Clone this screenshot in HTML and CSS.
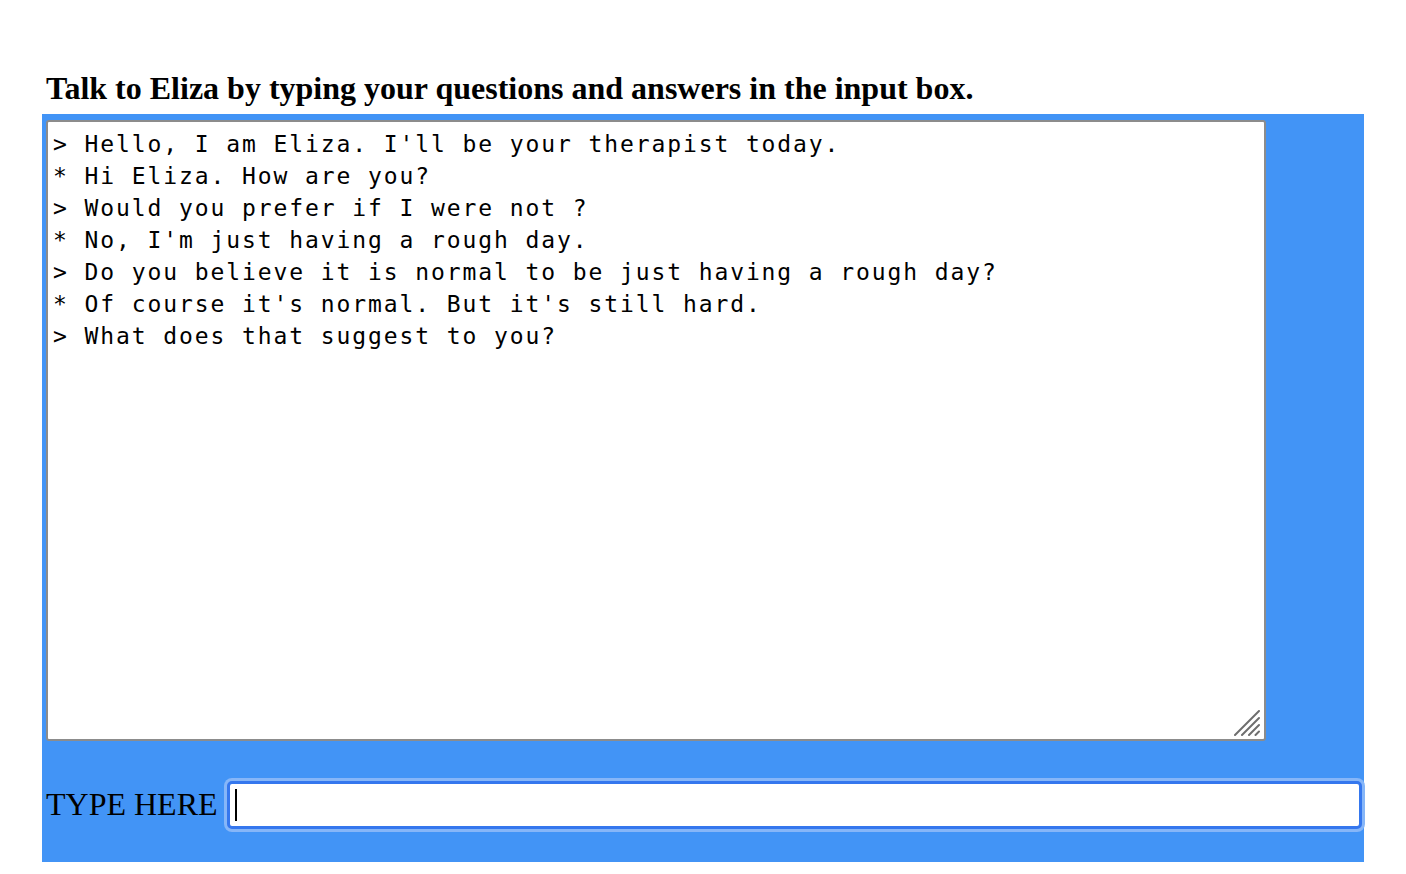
FILE: index.html
```html
<!DOCTYPE html>
<html lang="en">
<head>
<meta charset="utf-8">
<title>Eliza</title>
<link rel="stylesheet" href="styles.css">
</head>
<body>
<div class="page">
  <h1 class="title">Talk to Eliza by typing your questions and answers in the input box.</h1>
  <form class="panel">
    <div class="log-wrap">
      <textarea class="log" rows="19" cols="70">&gt; Hello, I am Eliza. I'll be your therapist today.
* Hi Eliza. How are you?
&gt; Would you prefer if I were not ?
* No, I'm just having a rough day.
&gt; Do you believe it is normal to be just having a rough day?
* Of course it's normal. But it's still hard.
&gt; What does that suggest to you?</textarea>
      <svg class="grip" width="26" height="26" viewBox="0 0 26 26" aria-hidden="true">
        <path d="M1 25 L25 1 M8 25 L25 8 M15 25 L25 15 M21.5 25 L25 21.5" stroke="#6e6e6e" stroke-width="2" stroke-linecap="round" fill="none"/>
      </svg>
    </div>
    <div class="entry">
      <label class="entry-label" for="q">TYPE HERE</label>
      <div class="entry-box">
        <input class="entry-input" id="q" type="text">
        <span class="caret"></span>
      </div>
    </div>
  </form>
</div>
</body>
</html>
```
FILE: styles.css
```css
html, body {
  margin: 0;
  padding: 0;
  background: #ffffff;
}

.page {
  padding: 70px 0 0 42px;
  width: 1322px;
}

.title {
  margin: 0 0 8px 4px;
  font-family: "Liberation Serif", "Times New Roman", serif;
  font-weight: bold;
  font-size: 32px;
  line-height: 36px;
  color: #000;
}

.panel {
  margin: 0;
  background: #4294f6;
  padding: 6px 2px 33px 4px;
  display: flex;
  flex-direction: column;
  align-items: flex-start;
}

.log-wrap {
  position: relative;
  width: 1220px;
  height: 621px;
}

.log {
  display: block;
  box-sizing: border-box;
  width: 1220px;
  height: 621px;
  margin: 0;
  padding: 6px 5px;
  border: 2px solid #8c8c8c;
  border-radius: 3px;
  background: #ffffff;
  color: #000;
  font-family: "DejaVu Sans Mono", monospace;
  font-size: 23px;
  letter-spacing: 1.9px;
  line-height: 32px;
  outline: none;
  resize: none;
}

.grip {
  position: absolute;
  right: 6px;
  bottom: 5px;
}

.entry {
  align-self: stretch;
  display: flex;
  align-items: center;
  gap: 9px;
  margin-top: 40px;
}

.entry-label {
  font-family: "Liberation Serif", "Times New Roman", serif;
  font-size: 32px;
  line-height: 36px;
  color: #000;
  padding-bottom: 2px;
}

.entry-box {
  flex: 1;
  position: relative;
  display: flex;
}

.entry-input {
  flex: 1;
  box-sizing: border-box;
  height: 48px;
  margin: 0;
  padding: 0 6px;
  border: 3px solid #3577ee;
  border-radius: 5px;
  background: #ffffff;
  box-shadow: 0 0 0 3px #86b6f8;
  font-family: "Liberation Sans", Arial, sans-serif;
  font-size: 28px;
  color: #000;
  outline: none;
}

.caret {
  position: absolute;
  left: 8px;
  top: 8px;
  width: 2px;
  height: 32px;
  background: #000;
}
```
